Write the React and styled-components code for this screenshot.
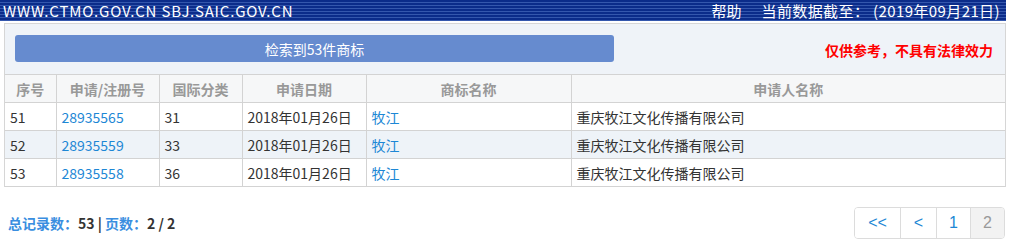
import React from 'react';
import styled, { createGlobalStyle } from 'styled-components';

const GlobalStyle = createGlobalStyle`
  body {
    margin: 0;
    background: #fff;
    font-family: "Noto Sans CJK SC", "Noto Sans", sans-serif;
    font-size: 14px;
    color: #333;
  }
`;

const Page = styled.div`
  width: 1006px;
`;

const TopBar = styled.div`
  height: 21px;
  display: flex;
  align-items: center;
  padding: 0 6px 0 3px;
  color: #fff;
  font-size: 15px;
  background-color: #0b2c8a;
  background-image: repeating-linear-gradient(
    to bottom,
    #0b2c8a 0px,
    #0b2c8a 2px,
    #3457ad 2px,
    #3457ad 3px
  );
`;

const Site = styled.div`
  flex: 1;
  letter-spacing: 0.8px;
`;

const TopLink = styled.span`
  margin-right: 20px;
`;

const DataDate = styled.span`
  letter-spacing: 0.4px;
`;

const Panel = styled.div`
  margin: 2px 0 0 4px;
  border: 1px solid #d6d6d6;
  border-bottom: none;
  background: #eff3f8;
`;

const SearchRow = styled.div`
  display: flex;
  align-items: center;
  padding: 11px 12px 12px 10px;
`;

const ResultButton = styled.div`
  width: 599px;
  height: 27px;
  border-radius: 3px;
  background: #668bcf;
  color: #fff;
  display: flex;
  align-items: center;
  justify-content: center;
  font-size: 14px;
`;

const Warning = styled.div`
  margin-left: auto;
  color: #f00;
  font-weight: bold;
  font-size: 14px;
  padding-top: 2px;
`;

const Table = styled.table`
  width: 100%;
  border-collapse: collapse;
  table-layout: fixed;
`;

const Th = styled.th`
  height: 27px;
  padding: 0;
  background: #f6f7f8;
  color: #999;
  font-weight: bold;
  font-size: 14px;
  text-align: center;
  border: 1px solid #d3d3d3;
  &:first-child { border-left: none; }
  &:last-child { border-right: none; }
`;

const Tr = styled.tr`
  background: ${p => (p.$alt ? '#eef3f8' : '#fff')};
`;

const Td = styled.td`
  height: 27px;
  padding: 0 0 0 5px;
  border: 1px solid #d3d3d3;
  color: ${p => (p.$link ? '#1d87d5' : '#333')};
  font-size: 14px;
  white-space: nowrap;
  &:first-child { border-left: none; }
  &:last-child { border-right: none; }
`;

const Footer = styled.div`
  display: flex;
  align-items: center;
  justify-content: space-between;
  margin: 20px 0 0 8px;
`;

const Summary = styled.div`
  font-size: 14px;
  font-weight: bold;
`;

const Label = styled.span`
  color: #3a8ee0;
`;

const Value = styled.span`
  color: #333;
`;

const Pager = styled.div`
  display: flex;
  border: 1px solid #dcdcdc;
  border-radius: 4px;
  overflow: hidden;
  height: 30px;
  margin-right: 1px;
`;

const PageBtn = styled.div`
  width: ${p => p.$w}px;
  display: flex;
  align-items: center;
  justify-content: center;
  font-family: "Liberation Sans", Arial, sans-serif;
  font-size: 16px;
  color: ${p => (p.$active ? '#999' : '#1d87d5')};
  background: ${p => (p.$active ? '#f2f2f2' : '#fff')};
  & + & { border-left: 1px solid #dcdcdc; }
`;

const rows = [
  { no: 51, reg: '28935565', cls: '31' },
  { no: 52, reg: '28935559', cls: '33' },
  { no: 53, reg: '28935558', cls: '36' },
];

export default function App() {
  return (
    <Page>
      <GlobalStyle />
      <TopBar>
        <Site>WWW.CTMO.GOV.CN SBJ.SAIC.GOV.CN</Site>
        <TopLink>帮助</TopLink>
        <DataDate>当前数据截至： (2019年09月21日)</DataDate>
      </TopBar>
      <Panel>
        <SearchRow>
          <ResultButton>检索到53件商标</ResultButton>
          <Warning>仅供参考，不具有法律效力</Warning>
        </SearchRow>
        <Table>
          <colgroup>
            <col style={{ width: 51 }} />
            <col style={{ width: 103 }} />
            <col style={{ width: 83 }} />
            <col style={{ width: 124 }} />
            <col style={{ width: 205 }} />
            <col />
          </colgroup>
          <thead>
            <tr>
              <Th>序号</Th>
              <Th>申请/注册号</Th>
              <Th>国际分类</Th>
              <Th>申请日期</Th>
              <Th>商标名称</Th>
              <Th>申请人名称</Th>
            </tr>
          </thead>
          <tbody>
            {rows.map((r, i) => (
              <Tr key={r.no} $alt={i === 1}>
                <Td>{r.no}</Td>
                <Td $link>{r.reg}</Td>
                <Td>{r.cls}</Td>
                <Td>2018年01月26日</Td>
                <Td $link>牧江</Td>
                <Td>重庆牧江文化传播有限公司</Td>
              </Tr>
            ))}
          </tbody>
        </Table>
      </Panel>
      <Footer>
        <Summary>
          <Label>总记录数：</Label>
          <Value>53</Value> <Value>|</Value> <Label>页数：</Label>
          <Value>2 / 2</Value>
        </Summary>
        <Pager>
          <PageBtn $w={45}>&lt;&lt;</PageBtn>
          <PageBtn $w={35}>&lt;</PageBtn>
          <PageBtn $w={33}>1</PageBtn>
          <PageBtn $w={33} $active>2</PageBtn>
        </Pager>
      </Footer>
    </Page>
  );
}
